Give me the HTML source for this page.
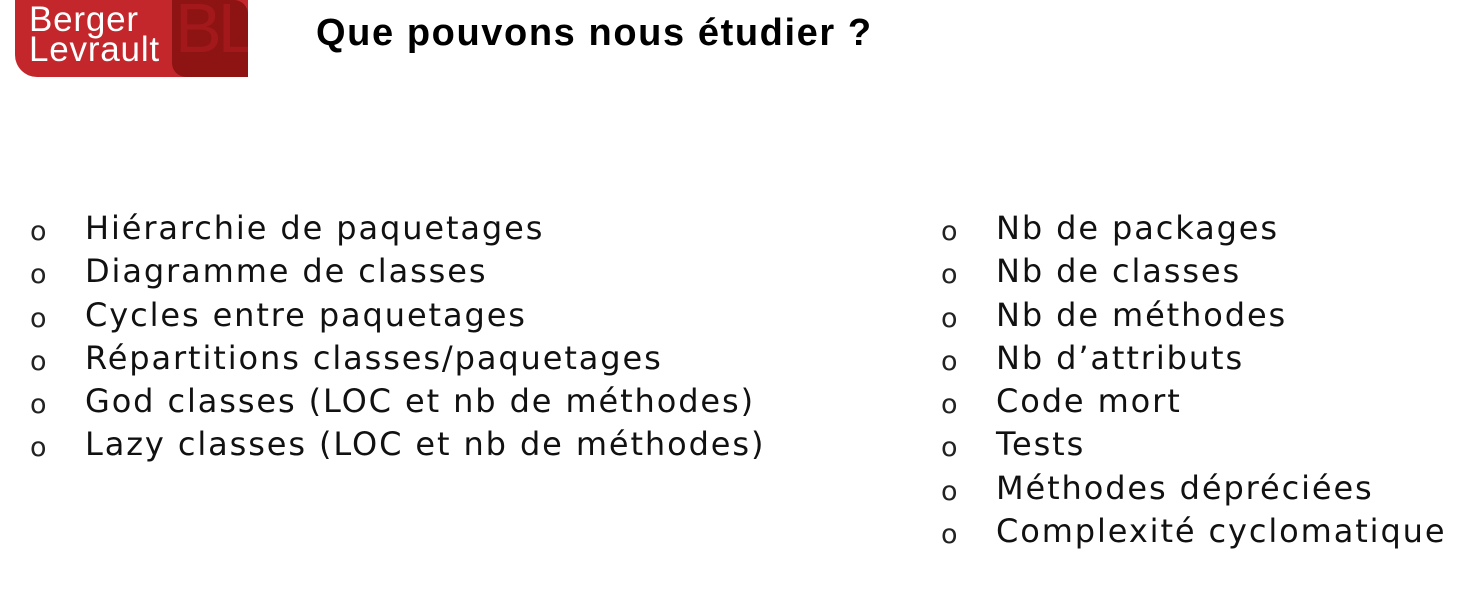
<!DOCTYPE html>
<html><head><meta charset="utf-8"><style>
body{margin:0;width:1464px;height:595px;background:#fff;position:relative;overflow:hidden;font-family:"DejaVu Sans","Liberation Sans",sans-serif;}
.logo{position:absolute;left:15px;top:0;width:233px;height:77px;background:#c3272c;border-radius:0 0 0 22px;overflow:hidden}
.logo .dk{position:absolute;left:157px;top:0;width:76px;height:77px;background:#8e1414;border-radius:0 14px 0 14px}
.logo .t{position:absolute;left:14px;top:5px;color:#fff;font-family:"Liberation Sans",sans-serif;font-size:35px;line-height:30px;letter-spacing:0.8px}
.logo .bl{position:absolute;left:160px;top:-12px;color:#a3191b;font-family:"Liberation Sans",sans-serif;font-size:70px;letter-spacing:-4px}
h1{position:absolute;left:316px;top:12px;margin:0;font-family:"Liberation Sans",sans-serif;font-weight:bold;font-size:38px;color:#000;letter-spacing:1.6px}
ul{position:absolute;list-style:none;margin:0;padding:0;font-size:32px;line-height:43.3px;color:#111;letter-spacing:1.9px}
li{position:relative;white-space:nowrap}
li:before{content:"o";position:absolute;left:-55px;top:3px;font-size:27px;color:#222;letter-spacing:0}
</style></head><body>
<div class="logo"><div class="dk"></div><div class="bl">BL</div><div class="t">Berger<br>Levrault</div></div>
<h1>Que pouvons nous étudier ?</h1>
<ul style="left:85px;top:207px">
<li>Hiérarchie de paquetages</li>
<li>Diagramme de classes</li>
<li>Cycles entre paquetages</li>
<li>Répartitions classes/paquetages</li>
<li>God classes (LOC et nb de méthodes)</li>
<li>Lazy classes (LOC et nb de méthodes)</li>
</ul>
<ul style="left:996px;top:207px">
<li>Nb de packages</li>
<li>Nb de classes</li>
<li>Nb de méthodes</li>
<li>Nb d’attributs</li>
<li>Code mort</li>
<li>Tests</li>
<li>Méthodes dépréciées</li>
<li>Complexité cyclomatique</li>
</ul>
</body></html>
